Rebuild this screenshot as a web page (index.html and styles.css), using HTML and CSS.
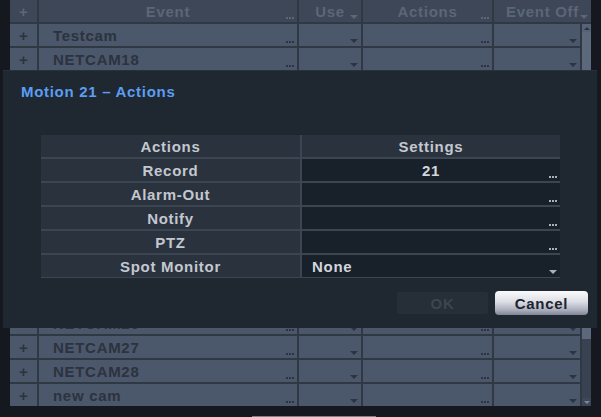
FILE: index.html
```html
<!DOCTYPE html>
<html lang="en">
<head>
  <meta charset="UTF-8">
  <meta name="viewport" content="width=device-width, initial-scale=1.0">
  <title>Motion 21 - Actions</title>
  <link rel="stylesheet" href="styles.css">
</head>
<body>
  <div class="event-table">
    <div class="scrollbar">
      <div class="scroll-btn up"></div>
      <div class="scroll-thumb"></div>
      <div class="scroll-track"></div>
      <div class="scroll-btn down"></div>
    </div>

    <div class="cell head plus">+</div>
    <div class="cell head">Event<i class="dots"></i></div>
    <div class="cell head">Use<i class="arrow"></i></div>
    <div class="cell head">Actions<i class="dots"></i></div>
    <div class="cell head wide">Event Off<i class="arrow"></i></div>

    <div class="cell plus">+</div><div class="cell name">Testcam<i class="dots"></i></div><div class="cell"><i class="arrow"></i></div><div class="cell"><i class="dots"></i></div><div class="cell"><i class="arrow"></i></div>
    <div class="cell plus">+</div><div class="cell name">NETCAM18<i class="dots"></i></div><div class="cell"><i class="arrow"></i></div><div class="cell"><i class="dots"></i></div><div class="cell"><i class="arrow"></i></div>

    <!-- rows hidden behind the dialog -->
    <div class="cell plus"></div><div class="cell name"></div><div class="cell"></div><div class="cell"></div><div class="cell"></div>
    <div class="cell plus"></div><div class="cell name"></div><div class="cell"></div><div class="cell"></div><div class="cell"></div>
    <div class="cell plus"></div><div class="cell name"></div><div class="cell"></div><div class="cell"></div><div class="cell"></div>
    <div class="cell plus"></div><div class="cell name"></div><div class="cell"></div><div class="cell"></div><div class="cell"></div>
    <div class="cell plus"></div><div class="cell name"></div><div class="cell"></div><div class="cell"></div><div class="cell"></div>
    <div class="cell plus"></div><div class="cell name"></div><div class="cell"></div><div class="cell"></div><div class="cell"></div>
    <div class="cell plus"></div><div class="cell name"></div><div class="cell"></div><div class="cell"></div><div class="cell"></div>
    <div class="cell plus"></div><div class="cell name"></div><div class="cell"></div><div class="cell"></div><div class="cell"></div>
    <div class="cell plus"></div><div class="cell name"></div><div class="cell"></div><div class="cell"></div><div class="cell"></div>
    <div class="cell plus"></div><div class="cell name"></div><div class="cell"></div><div class="cell"></div><div class="cell"></div>

    <div class="cell plus">+</div><div class="cell name">NETCAM26<i class="dots"></i></div><div class="cell"><i class="arrow"></i></div><div class="cell"><i class="dots"></i></div><div class="cell"><i class="arrow"></i></div>
    <div class="cell plus">+</div><div class="cell name">NETCAM27<i class="dots"></i></div><div class="cell"><i class="arrow"></i></div><div class="cell"><i class="dots"></i></div><div class="cell"><i class="arrow"></i></div>
    <div class="cell plus">+</div><div class="cell name">NETCAM28<i class="dots"></i></div><div class="cell"><i class="arrow"></i></div><div class="cell"><i class="dots"></i></div><div class="cell"><i class="arrow"></i></div>
    <div class="cell plus">+</div><div class="cell name">new cam<i class="dots"></i></div><div class="cell"><i class="arrow"></i></div><div class="cell"><i class="dots"></i></div><div class="cell"><i class="arrow"></i></div>
  </div>
  <div class="status-strip"></div>

  <div class="dialog">
    <h1 class="dialog-title">Motion 21 &ndash; Actions</h1>

    <div class="action-table">
      <div class="a-cell a-head">Actions</div>
      <div class="a-cell a-head">Settings</div>

      <div class="a-cell a-label">Record</div>
      <div class="a-cell a-value center">21<i class="dots"></i></div>

      <div class="a-cell a-label">Alarm-Out</div>
      <div class="a-cell a-value"><i class="dots"></i></div>

      <div class="a-cell a-label">Notify</div>
      <div class="a-cell a-value"><i class="dots"></i></div>

      <div class="a-cell a-label">PTZ</div>
      <div class="a-cell a-value"><i class="dots"></i></div>

      <div class="a-cell a-label">Spot Monitor</div>
      <div class="a-cell a-value">None<i class="arrow"></i></div>
    </div>

    <div class="dialog-buttons">
      <button class="btn btn-ok" disabled>OK</button>
      <button class="btn btn-cancel">Cancel</button>
    </div>
  </div>
</body>
</html>
```

FILE: styles.css
```css
:root {
  --page: #15191f;
  --grid-line: #303844;
  --row: #4b576a;
  --head: #3d4758;
  --dialog: #1f2730;
  --title: #5b9ef2;
}
* {
  box-sizing: border-box;
}
body {
  margin: 0;
  background: var(--page);
  font-family: 'Liberation Sans', Arial, sans-serif;
  font-weight: bold;
  font-size: 15px;
  letter-spacing: 0.7px;
  position: relative;
  width: 601px;
  height: 417px;
  overflow: hidden;
}

/* background event list */
.event-table {
  display: grid;
  grid-template-columns: 27px 258px 62px 129px 86px 9px;
  grid-auto-rows: 22px;
  gap: 2px;
  width: 581px;
  margin-left: 10px;
  background: var(--grid-line);
}
.cell {
  position: relative;
  display: flex;
  align-items: center;
  background: var(--row);
  color: #2c333e;
  white-space: nowrap;
}
.cell.head {
  background: var(--head);
  color: #5b6677;
  justify-content: center;
}
.cell.wide {
  grid-column: 5 / 7;
}
.cell.plus {
  justify-content: center;
  letter-spacing: 0;
}
.cell.name {
  padding-left: 14px;
}
.cell .dots,
.cell .arrow {
  position: absolute;
  right: 3px;
  bottom: 3px;
}
.dots {
  display: block;
  width: 8px;
  height: 2px;
  background: repeating-linear-gradient(90deg, #2c343f 0 2px, transparent 2px 3px);
}
.arrow {
  display: block;
  width: 0;
  height: 0;
  border-left: 4px solid transparent;
  border-right: 4px solid transparent;
  border-top: 4px solid #2c343f;
}
.cell.head .dots {
  background: repeating-linear-gradient(90deg, #5b6677 0 2px, transparent 2px 3px);
}
.cell.head .arrow {
  border-top-color: #5b6677;
}

.scrollbar {
  grid-column: 6;
  grid-row: 2 / 18;
  display: flex;
  flex-direction: column;
  background: #394250;
}
.scroll-btn {
  height: 8px;
  background: #56627a;
  display: flex;
  align-items: center;
  justify-content: center;
}
.scroll-btn.up::after {
  content: '';
  border-left: 3px solid transparent;
  border-right: 3px solid transparent;
  border-bottom: 3px solid #2c333e;
}
.scroll-btn.down::after {
  content: '';
  border-left: 3px solid transparent;
  border-right: 3px solid transparent;
  border-top: 3px solid #7d889a;
}
.scroll-btn.down {
  background: #3e4756;
}
.scroll-thumb {
  height: 307px;
  background: #5c687c;
}
.scroll-track {
  flex: 1;
}

.status-strip {
  width: 124px;
  height: 1px;
  margin: 10px 0 0 252px;
  background: #7c828c;
}

/* modal */
.dialog {
  position: absolute;
  left: 3px;
  top: 70px;
  width: 594px;
  padding: 12px 9px 13px 0;
  background: var(--dialog);
  border-top: 1px solid #29313a;
  display: flex;
  flex-direction: column;
}
.dialog-title {
  margin: 0 0 34px 18px;
  font-size: 15px;
  line-height: 18px;
  color: var(--title);
  letter-spacing: 0.7px;
}

.action-table {
  display: grid;
  grid-template-columns: 259px 258px;
  grid-auto-rows: 22px;
  gap: 2px;
  margin-left: 38px;
  width: 519px;
  background: #3c4552;
  border-bottom: 1px solid #3c4552;
}
.a-cell {
  position: relative;
  display: flex;
  align-items: center;
  justify-content: center;
  color: #c3c8d0;
}
.a-head,
.a-label {
  background: #2a323d;
}
.a-value {
  background: #18202a;
  color: #d2d6dc;
  justify-content: flex-start;
  padding-left: 10px;
}
.a-value.center {
  justify-content: center;
  padding-left: 0;
}
.a-cell .dots,
.a-cell .arrow {
  position: absolute;
  right: 3px;
  bottom: 3px;
}
.a-cell .dots {
  background: repeating-linear-gradient(90deg, #aab0ba 0 2px, transparent 2px 3px);
}
.a-cell .arrow {
  border-top-color: #aab0ba;
}

.dialog-buttons {
  display: flex;
  justify-content: flex-end;
  align-items: center;
  gap: 7px;
  margin-top: 13px;
}
.btn {
  font-family: 'Liberation Sans', Arial, sans-serif;
  font-weight: bold;
  font-size: 15px;
  letter-spacing: 0.7px;
  border: none;
  padding: 0;
}
.btn-ok {
  width: 91px;
  height: 22px;
  background: #262e38;
  color: #3c4551;
  border-radius: 2px;
}
.btn-cancel {
  width: 93px;
  height: 24px;
  border-radius: 4px;
  color: #1d2431;
  background: linear-gradient(#fbfbfd, #dcdee4 45%, #a9adba 80%, #7f8597);
}
```
